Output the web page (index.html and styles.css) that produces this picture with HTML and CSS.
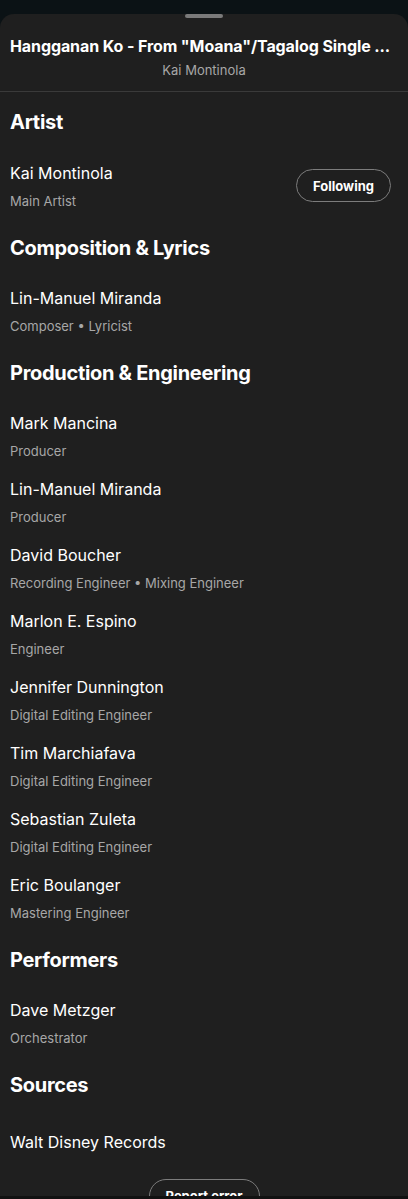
FILE: index.html
```html
<!DOCTYPE html>
<html lang="en">
<head>
    <meta charset="UTF-8">
    <meta name="viewport" content="width=device-width, initial-scale=1.0">
    <title>Song Credits</title>
    <link rel="stylesheet" href="styles.css">
</head>
<body>
    <div class="sheet">
        <div class="handle"></div>
        <header class="sheet-header">
            <div class="track-title">Hangganan Ko - From "Moana"/Tagalog Single ...</div>
            <div class="track-artist">Kai Montinola</div>
        </header>

        <section class="credit-section">
            <h2>Artist</h2>
            <div class="credit-row">
                <div class="credit-info">
                    <div class="credit-name">Kai Montinola</div>
                    <div class="credit-role">Main Artist</div>
                </div>
                <button class="pill-button">Following</button>
            </div>
        </section>

        <section class="credit-section">
            <h2>Composition &amp; Lyrics</h2>
            <div class="credit-row">
                <div class="credit-info">
                    <div class="credit-name">Lin-Manuel Miranda</div>
                    <div class="credit-role">Composer • Lyricist</div>
                </div>
            </div>
        </section>

        <section class="credit-section">
            <h2>Production &amp; Engineering</h2>
            <div class="credit-row">
                <div class="credit-info">
                    <div class="credit-name">Mark Mancina</div>
                    <div class="credit-role">Producer</div>
                </div>
            </div>
            <div class="credit-row">
                <div class="credit-info">
                    <div class="credit-name">Lin-Manuel Miranda</div>
                    <div class="credit-role">Producer</div>
                </div>
            </div>
            <div class="credit-row">
                <div class="credit-info">
                    <div class="credit-name">David Boucher</div>
                    <div class="credit-role">Recording Engineer • Mixing Engineer</div>
                </div>
            </div>
            <div class="credit-row">
                <div class="credit-info">
                    <div class="credit-name">Marlon E. Espino</div>
                    <div class="credit-role">Engineer</div>
                </div>
            </div>
            <div class="credit-row">
                <div class="credit-info">
                    <div class="credit-name">Jennifer Dunnington</div>
                    <div class="credit-role">Digital Editing Engineer</div>
                </div>
            </div>
            <div class="credit-row">
                <div class="credit-info">
                    <div class="credit-name">Tim Marchiafava</div>
                    <div class="credit-role">Digital Editing Engineer</div>
                </div>
            </div>
            <div class="credit-row">
                <div class="credit-info">
                    <div class="credit-name">Sebastian Zuleta</div>
                    <div class="credit-role">Digital Editing Engineer</div>
                </div>
            </div>
            <div class="credit-row">
                <div class="credit-info">
                    <div class="credit-name">Eric Boulanger</div>
                    <div class="credit-role">Mastering Engineer</div>
                </div>
            </div>
        </section>

        <section class="credit-section">
            <h2>Performers</h2>
            <div class="credit-row">
                <div class="credit-info">
                    <div class="credit-name">Dave Metzger</div>
                    <div class="credit-role">Orchestrator</div>
                </div>
            </div>
        </section>

        <section class="credit-section">
            <h2>Sources</h2>
            <div class="source-row">Walt Disney Records</div>
        </section>

        <div class="report">
            <button class="pill-button">Report error</button>
        </div>
    </div>
    <div class="nav-bar"></div>
</body>
</html>
```

FILE: styles.css
```css
:root {
    --bg-outer: #0b1215;
    --bg-sheet: #1f1f1f;
    --text-primary: #ffffff;
    --text-secondary: #a7a7a7;
    --divider: #3a3a3a;
    --pill-border: #7c7c7c;
    --font-base: Inter, "Noto Sans", sans-serif;
}

* {
    box-sizing: border-box;
}

html, body {
    margin: 0;
    padding: 0;
    height: 100%;
    overflow: hidden;
}

body {
    background-color: var(--bg-outer);
    font-family: var(--font-base);
    color: var(--text-primary);
    padding-top: 4px;
}

.sheet {
    background-color: var(--bg-sheet);
    border-radius: 14px 14px 0 0;
    min-height: 1300px;
}

.handle {
    width: 38px;
    height: 4px;
    border-radius: 2px;
    background-color: #7a7a7a;
    margin: 10px auto 0;
}

.sheet-header {
    padding: 17px 10px 12px;
    border-bottom: 1px solid var(--divider);
    text-align: center;
}

.track-title {
    font-size: 16px;
    font-weight: 700;
    line-height: 22px;
    text-align: left;
    white-space: nowrap;
    overflow: hidden;
    letter-spacing: -0.1px;
}

.track-artist {
    font-size: 13px;
    line-height: 18px;
    color: var(--text-secondary);
    margin-top: 4px;
}

.credit-section {
    padding: 0 10px;
}

.credit-section h2 {
    font-size: 20px;
    font-weight: 700;
    line-height: 26px;
    margin: 17px 0 16px;
    letter-spacing: -0.3px;
}

.credit-section:first-of-type h2 {
    margin-bottom: 17px;
}

.credit-row {
    display: flex;
    align-items: center;
    justify-content: space-between;
    padding: 10px 0 9px;
}

.credit-name {
    font-size: 16px;
    line-height: 22px;
}

.credit-role {
    font-size: 13px;
    line-height: 16px;
    color: var(--text-secondary);
    margin-top: 9px;
}

.source-row {
    font-size: 16px;
    line-height: 22px;
    padding: 17px 0 0;
}

.pill-button {
    background: transparent;
    color: var(--text-primary);
    border: 1px solid var(--pill-border);
    border-radius: 17px;
    height: 33px;
    padding: 0 16px;
    font-family: var(--font-base);
    font-size: 13px;
    font-weight: 700;
    white-space: nowrap;
    cursor: pointer;
    margin-right: 7px;
}

.report {
    display: flex;
    justify-content: center;
    padding-top: 26px;
}

.report .pill-button {
    margin-right: 0;
    width: 111px;
    height: 34px;
}

.nav-bar {
    position: fixed;
    left: 0;
    right: 0;
    bottom: 0;
    height: 3px;
    background-color: #111;
}
```
